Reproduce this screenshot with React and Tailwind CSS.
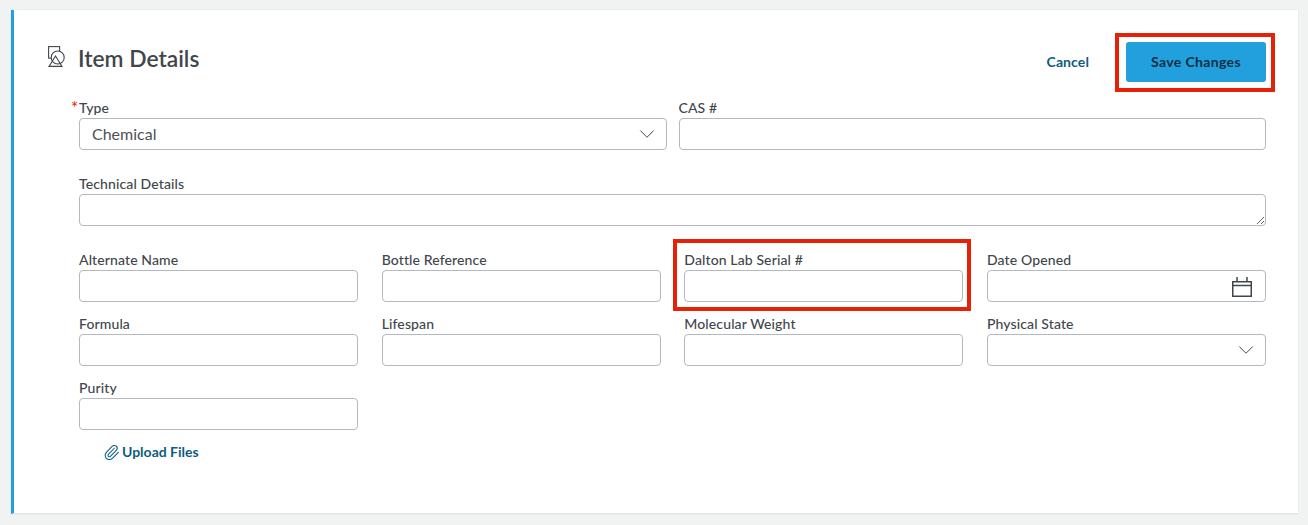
import { ChevronDown, Paperclip } from "lucide-react";

const inputBox = "h-8 w-full rounded-[4px] border border-[#b4b9bf] bg-white";

const Field = ({ label, children }) => (
  <div className="flex h-[64px] flex-col">
    <label className="h-[16px] text-[14px] leading-[12px] font-medium tracking-[0.12px] text-[#41464d]">{label}</label>
    {children || <div className={inputBox} />}
  </div>
);

const CalendarIcon = () => (
  <svg width="20" height="20" viewBox="0 0 20 20" fill="none" stroke="#41464d" strokeWidth="1.5">
    <rect x="0.75" y="4.75" width="18.5" height="14.5" />
    <path d="M1 8.5H19" />
    <path d="M5 0V4M15 0V4" />
  </svg>
);

const ItemIcon = () => (
  <svg width="17" height="21" viewBox="0 0 17 21" fill="none" stroke="#41464d" strokeWidth="1.1">
    <rect x="0.6" y="0.6" width="11" height="11.5" />
    <circle cx="9.7" cy="11.5" r="6.5" fill="white" />
    <path d="M7.5 10L14 20.4H1Z" />
  </svg>
);

const Chevron = () => <ChevronDown size={26} strokeWidth={0.9} color="#41464d" />;

export default function App() {
  return (
    <div className="h-[525px] bg-[#f1f3f3] pt-[10px] pr-[10px] pb-[11px] pl-[11px] font-['Lato',sans-serif]">
      <div className="h-[504px] border-l-[3px] border-b border-[#22a0dd] border-b-[#e2e4e5] bg-white pt-[32px] pr-[32px] pl-[65px] shadow-[0_0_1px_rgba(0,0,0,0.15)]">
        <div className="relative flex h-[60px] items-start justify-between">
          <div className="absolute top-[4px] left-[-31px]">
            <ItemIcon />
          </div>
          <h1 className="mt-[2px] -ml-px text-[22.8px] leading-[28px] font-semibold text-[#41464d]">Item Details</h1>
          <div className="flex items-start">
            <button className="mt-[10px] mr-[37px] text-[14px] leading-[20px] font-bold tracking-[0.1px] text-[#0b5d80]">Cancel</button>
            <div className="relative">
              <button className="block h-10 w-[140px] rounded-[3px] bg-[#22a0dd] pb-[1px] text-[14px] font-bold tracking-[0.35px] text-[#0e2f44]">
                Save Changes
              </button>
              <div className="pointer-events-none absolute top-[-9px] left-[-11px] h-[59px] w-[160px] border-4 border-[#e52207]" />
            </div>
          </div>
        </div>

        <div className="grid h-[76px] grid-cols-2 gap-x-[12px]">
          <div className="relative">
            <span className="absolute top-[-2px] left-[-8px] text-[17px] leading-[16px] text-[#e52207]">*</span>
            <Field label="Type">
              <div className={`${inputBox} flex items-center justify-between pr-[6px] pl-[12px]`}>
                <span className="text-[16px] text-[#4d5259]">Chemical</span>
                <Chevron />
              </div>
            </Field>
          </div>
          <Field label="CAS #" />
        </div>

        <div className="h-[76px]">
          <Field label="Technical Details">
            <textarea className={`${inputBox} block resize-y`} />
          </Field>
        </div>

        <div className="grid grid-cols-4 gap-x-[23.67px]">
          <Field label="Alternate Name" />
          <Field label="Bottle Reference" />
          <div className="relative">
            <Field label="Dalton Lab Serial #" />
            <div className="pointer-events-none absolute top-[-15px] left-[-11px] h-[72px] w-[298px] border-4 border-[#e52207]" />
          </div>
          <Field label="Date Opened">
            <div className={`${inputBox} flex items-center justify-end pr-[13px] pt-[1px]`}>
              <CalendarIcon />
            </div>
          </Field>
          <Field label="Formula" />
          <Field label="Lifespan" />
          <Field label="Molecular Weight" />
          <Field label="Physical State">
            <div className={`${inputBox} flex items-center justify-end pr-[6px]`}>
              <Chevron />
            </div>
          </Field>
          <Field label="Purity" />
        </div>

        <button className="-mt-[4px] ml-[24px] flex items-center gap-[2px] text-[14px] leading-[20px] font-bold text-[#0b5d80]">
          <Paperclip size={17} strokeWidth={1.5} />
          Upload Files
        </button>
      </div>
    </div>
  );
}
